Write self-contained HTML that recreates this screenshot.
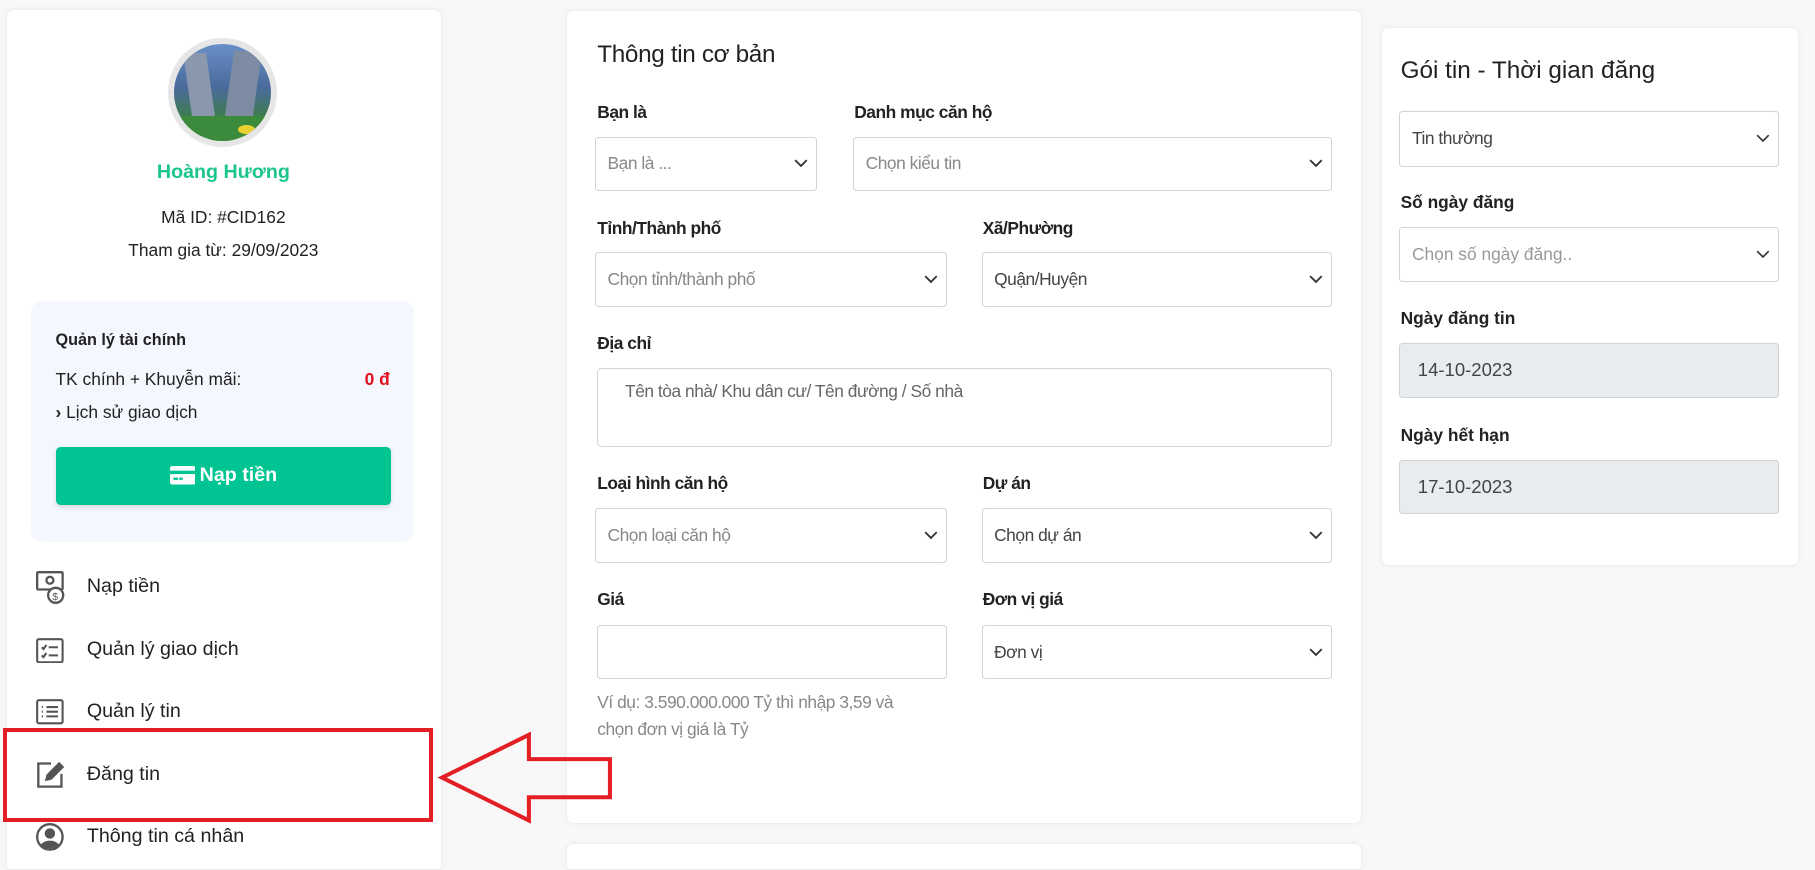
<!DOCTYPE html>
<html><head><meta charset="utf-8"><style>
html,body{margin:0;padding:0;width:1815px;height:870px;overflow:hidden;background:#f8f8f8;}
#w{position:absolute;left:0;top:0;width:1568px;height:752px;zoom:1.1575;font-family:"Liberation Sans",sans-serif;color:#222;overflow:hidden;}
.a{position:absolute;}
.card{position:absolute;background:#fff;border:1px solid #eee;border-radius:6px;box-shadow:0 0 6px rgba(0,0,0,.04);box-sizing:border-box;}
.lbl{position:absolute;font-size:15px;font-weight:bold;color:#222;letter-spacing:-.4px;}
.sel{position:absolute;box-sizing:border-box;border:1px solid #d3d3d3;border-radius:3px;background:#fff;font-size:15px;color:#888;padding-left:10px;display:flex;align-items:center;letter-spacing:-.4px;}
.sel.dk{color:#444;}
.sel svg{position:absolute;right:7px;top:50%;margin-top:-4px;}
.menu{position:absolute;left:75px;font-size:17px;color:#222;}
.ic{position:absolute;left:31px;}
</style></head><body><div id="w">
<div class="card" style="left:5px;top:8px;width:377px;height:744px;border-radius:6px 6px 0 0;"></div>
<div class="a" style="left:145px;top:33px;width:94px;height:94px;border-radius:50%;background:#e6e6e6;"></div>
<div class="a" style="left:150px;top:38px;width:84px;height:84px;border-radius:50%;overflow:hidden;background:linear-gradient(#6a8fc8 0%,#4a6a9c 45%,#3f7a55 72%,#3d8a3a 100%);">
<div class="a" style="left:12px;top:8px;width:20px;height:60px;background:#8a97ad;transform:skewX(8deg)"></div>
<div class="a" style="left:48px;top:6px;width:24px;height:62px;background:#7d8ba3;transform:skewX(-8deg)"></div>
<div class="a" style="left:0;top:62px;width:84px;height:22px;background:#3c8a3b"></div>
<div class="a" style="left:56px;top:70px;width:14px;height:8px;border-radius:50%;background:#e8d030"></div>
</div>
<div class="a" style="left:5px;width:376px;top:139px;text-align:center;font-size:17px;font-weight:bold;color:#1cc48e;">Hoàng Hương</div>
<div class="a" style="left:5px;width:376px;top:179px;text-align:center;font-size:15px;color:#222;">Mã ID: #CID162</div>
<div class="a" style="left:5px;width:376px;top:207px;text-align:center;font-size:15px;color:#222;">Tham gia từ: 29/09/2023</div>
<div class="a" style="left:27px;top:260px;width:331px;height:208px;background:#f4f7fd;border-radius:10px;"></div>
<div class="a" style="left:48px;top:286px;font-size:14px;font-weight:bold;">Quản lý tài chính</div>
<div class="a" style="left:48px;top:319px;font-size:15px;">TK chính + Khuyễn mãi:</div>
<div class="a" style="left:315px;top:319px;font-size:15px;font-weight:bold;color:#e0101e;">0 đ</div>
<div class="a" style="left:48px;top:347px;font-size:15px;"><b>›</b> Lịch sử giao dịch</div>
<div class="a" style="left:48px;top:386px;width:290px;height:50px;background:#00c592;border-radius:4px;box-shadow:0 2px 4px rgba(0,0,0,.12);color:#fff;font-weight:bold;font-size:17px;display:flex;align-items:center;justify-content:center;">
<svg width="22" height="16" viewBox="0 0 22 16" style="margin-right:4px"><rect x="0" y="0" width="22" height="16" rx="2" fill="#fff"/><rect x="0" y="4" width="22" height="3" fill="#00c592"/><rect x="3" y="10" width="4" height="2" fill="#00c592"/><rect x="8" y="10" width="3" height="2" fill="#00c592"/></svg>Nạp tiền</div>
<svg class="ic" style="top:493px" width="26" height="30" viewBox="0 0 26 30" fill="none" stroke="#555" stroke-width="2"><rect x="1" y="1" width="22" height="15" rx="1"/><circle cx="12" cy="8" r="3"/><circle cx="17" cy="21" r="6.5" fill="#fff"/><text x="14" y="25" font-size="9" fill="#555" stroke="none" font-family="Liberation Sans">$</text></svg>
<div class="menu" style="top:497px">Nạp tiền</div>
<svg class="ic" style="top:551px" width="24" height="22" viewBox="0 0 24 22" fill="none" stroke="#555" stroke-width="1.8"><rect x="1" y="1" width="22" height="20" rx="1.5"/><path d="M5 8l1.5 1.5L9 6M5 15l1.5 1.5L9 13M11 8h8M11 15h8"/></svg>
<div class="menu" style="top:551px">Quản lý giao dịch</div>
<svg class="ic" style="top:604px" width="24" height="22" viewBox="0 0 24 22" fill="none" stroke="#555" stroke-width="1.8"><rect x="1" y="1" width="22" height="20" rx="1.5"/><path d="M5 7h1M5 11h1M5 15h1M9 7h10M9 11h10M9 15h10"/></svg>
<div class="menu" style="top:605px">Quản lý tin</div>
<svg class="ic" style="top:657px" width="24" height="25" viewBox="0 0 24 25" fill="none" stroke="#555" stroke-width="2"><path d="M13 3H2v20h20V12"/><path d="M9 17l1-4L20 3l3 3-10 10z" fill="#555"/></svg>
<div class="menu" style="top:659px">Đăng tin</div>
<svg class="ic" style="top:711px" width="24" height="24" viewBox="0 0 24 24"><circle cx="12" cy="12" r="11" fill="none" stroke="#555" stroke-width="2"/><circle cx="12" cy="9" r="4.5" fill="#555"/><path d="M4 19c3-5 13-5 16 0c-4 4-12 4-16 0z" fill="#555"/></svg>
<div class="menu" style="top:713px">Thông tin cá nhân</div>
<div class="card" style="left:489px;top:9px;width:688px;height:703px;"></div>
<div class="card" style="left:489px;top:728px;width:688px;height:24px;border-radius:6px 6px 0 0;"></div>
<div class="a" style="left:516px;top:35px;font-size:21px;color:#222;letter-spacing:-.3px;">Thông tin cơ bản</div>
<div class="lbl" style="left:516px;top:88px">Bạn là</div>
<div class="lbl" style="left:738px;top:88px">Danh mục căn hộ</div>
<div class="sel" style="left:514px;top:118px;width:192px;height:47px;">Bạn là ...<svg width="12" height="8"><path d="M1 1l5 5 5-5" fill="none" stroke="#333" stroke-width="1.6"/></svg></div>
<div class="sel" style="left:737px;top:118px;width:414px;height:47px;">Chọn kiểu tin<svg width="12" height="8"><path d="M1 1l5 5 5-5" fill="none" stroke="#333" stroke-width="1.6"/></svg></div>
<div class="lbl" style="left:516px;top:188px">Tỉnh/Thành phố</div>
<div class="lbl" style="left:849px;top:188px">Xã/Phường</div>
<div class="sel" style="left:514px;top:218px;width:304px;height:47px;">Chọn tỉnh/thành phố<svg width="12" height="8"><path d="M1 1l5 5 5-5" fill="none" stroke="#333" stroke-width="1.6"/></svg></div>
<div class="sel dk" style="left:848px;top:218px;width:303px;height:47px;">Quận/Huyện<svg width="12" height="8"><path d="M1 1l5 5 5-5" fill="none" stroke="#333" stroke-width="1.6"/></svg></div>
<div class="lbl" style="left:516px;top:288px">Địa chỉ</div>
<div class="a" style="left:516px;top:318px;width:635px;height:68px;box-sizing:border-box;border:1px solid #d3d3d3;border-radius:4px;"></div>
<div class="a" style="left:540px;top:329px;font-size:15px;color:#666;letter-spacing:-.4px;">Tên tòa nhà/ Khu dân cư/ Tên đường / Số nhà</div>
<div class="lbl" style="left:516px;top:409px">Loại hình căn hộ</div>
<div class="lbl" style="left:849px;top:409px">Dự án</div>
<div class="sel" style="left:514px;top:439px;width:304px;height:47px;">Chọn loại căn hộ<svg width="12" height="8"><path d="M1 1l5 5 5-5" fill="none" stroke="#333" stroke-width="1.6"/></svg></div>
<div class="sel dk" style="left:848px;top:439px;width:303px;height:47px;">Chọn dự án<svg width="12" height="8"><path d="M1 1l5 5 5-5" fill="none" stroke="#333" stroke-width="1.6"/></svg></div>
<div class="lbl" style="left:516px;top:509px">Giá</div>
<div class="lbl" style="left:849px;top:509px">Đơn vị giá</div>
<div class="sel" style="left:516px;top:540px;width:302px;height:47px;"></div>
<div class="sel dk" style="left:848px;top:540px;width:303px;height:47px;">Đơn vị<svg width="12" height="8"><path d="M1 1l5 5 5-5" fill="none" stroke="#333" stroke-width="1.6"/></svg></div>
<div class="a" style="left:516px;top:595px;font-size:15px;color:#888;line-height:24px;letter-spacing:-.4px;">Ví dụ: 3.590.000.000 Tỷ thì nhập 3,59 và<br>chọn đơn vị giá là Tỷ</div>
<div class="a" style="left:3px;top:629px;width:364px;height:74px;border:4px solid #e31e24;"></div>
<svg class="a" style="left:375px;top:630px" width="160" height="85" viewBox="375 630 160 85"><polygon points="382,672 457,635 457,656 527,656 527,689 457,689 457,709" fill="none" stroke="#e31e24" stroke-width="3.5"/></svg>
<div class="card" style="left:1193px;top:23px;width:361px;height:466px;"></div>
<div class="a" style="left:1210px;top:49px;font-size:21px;font-weight:500;color:#222;">Gói tin - Thời gian đăng</div>
<div class="sel dk" style="left:1209px;top:96px;width:328px;height:48px;">Tin thường<svg width="12" height="8"><path d="M1 1l5 5 5-5" fill="none" stroke="#333" stroke-width="1.4"/></svg></div>
<div class="lbl" style="left:1210px;top:166px;letter-spacing:0">Số ngày đăng</div>
<div class="sel" style="left:1209px;top:196px;width:328px;height:48px;color:#999;letter-spacing:0">Chọn số ngày đăng..<svg width="12" height="8"><path d="M1 1l5 5 5-5" fill="none" stroke="#333" stroke-width="1.4"/></svg></div>
<div class="lbl" style="left:1210px;top:266px;letter-spacing:0">Ngày đăng tin</div>
<div class="sel dk" style="left:1209px;top:296px;width:328px;height:48px;background:#e9ecef;padding-left:15px;font-size:16px;letter-spacing:0">14-10-2023</div>
<div class="lbl" style="left:1210px;top:367px;letter-spacing:0">Ngày hết hạn</div>
<div class="sel dk" style="left:1209px;top:397px;width:328px;height:47px;background:#e9ecef;padding-left:15px;font-size:16px;letter-spacing:0">17-10-2023</div>
</div></body></html>
